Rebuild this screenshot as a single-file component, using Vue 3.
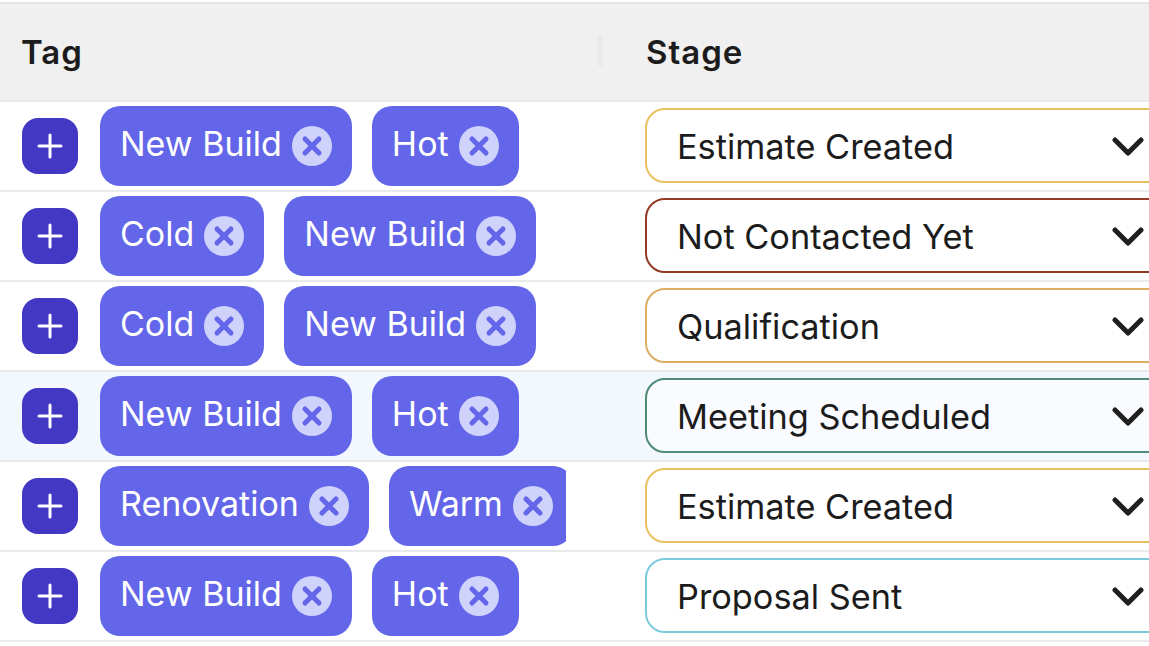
<script setup>
const rows = [
  { tags: ['New Build', 'Hot'], stage: 'Estimate Created', color: '#e8c15f' },
  { tags: ['Cold', 'New Build'], stage: 'Not Contacted Yet', color: '#933a25' },
  { tags: ['Cold', 'New Build'], stage: 'Qualification', color: '#dcae63' },
  { tags: ['New Build', 'Hot'], stage: 'Meeting Scheduled', color: '#4f8a76', active: true },
  { tags: ['Renovation', 'Warm'], stage: 'Estimate Created', color: '#e8c15f' },
  { tags: ['New Build', 'Hot'], stage: 'Proposal Sent', color: '#7ccbdc' },
]
</script>

<template>
  <div class="table">
    <div class="head">
      <div class="h-tag">Tag<span class="handle"></span></div>
      <div class="h-stage">Stage</div>
    </div>
    <div v-for="(r, i) in rows" :key="i" class="row" :class="{ active: r.active }">
      <div class="tag-cell">
        <button class="add">
          <svg width="28" height="28" viewBox="0 0 28 28"><path d="M14 3v22M3 14h22" stroke="#fff" stroke-width="3" stroke-linecap="round" fill="none" /></svg>
        </button>
        <div class="chips">
          <span v-for="t in r.tags" :key="t" class="chip">
            <span class="chip-text">{{ t }}</span>
            <span class="x">
              <svg width="40" height="40" viewBox="0 0 40 40"><path d="M13 13l14 14M27 13L13 27" stroke="#6366e8" stroke-width="5" stroke-linecap="round" fill="none" /></svg>
            </span>
          </span>
        </div>
      </div>
      <div class="stage-cell">
        <div class="select" :style="{ borderColor: r.color }">
          <span class="select-text">{{ r.stage }}</span>
          <svg class="chev" width="32" height="22" viewBox="0 0 32 22"><path d="M3 4l13 13L29 4" stroke="#1f1f1f" stroke-width="5" fill="none" stroke-linecap="round" stroke-linejoin="round" /></svg>
        </div>
      </div>
    </div>
  </div>
</template>

<style>
html, body { margin: 0; background: #fff; overflow: hidden; }
</style>

<style scoped>
.table {
  width: 1149px;
  height: 646px;
  overflow: hidden;
  padding-top: 2px;
  box-sizing: border-box;
  font-family: Inter, "Liberation Sans", sans-serif;
  color: #1c1c1c;
}
.head {
  display: flex;
  height: 100px;
  box-sizing: border-box;
  background: #f0f0f0;
  border-top: 2px solid #e5e5e5;
  border-bottom: 2px solid #e8e8e8;
  font-size: 33px;
  font-weight: 600;
  letter-spacing: 1px;
  align-items: center;
}
.h-tag {
  width: 625px;
  flex: none;
  box-sizing: border-box;
  padding-left: 21px;
  position: relative;
}
.handle {
  position: absolute;
  left: 598px;
  top: 3px;
  width: 5px;
  height: 31px;
  background: #e9e9e9;
}
.h-stage { padding-left: 21px; }
.row {
  display: flex;
  height: 90px;
  box-sizing: border-box;
  background: #fff;
  border-bottom: 2px solid #e9eaec;
}
.row.active { background: #f2f8fe; }
.tag-cell {
  width: 566px;
  flex: none;
  display: flex;
  align-items: center;
  padding-left: 22px;
  box-sizing: border-box;
  overflow: hidden;
}
.add {
  flex: none;
  width: 56px;
  height: 56px;
  border: 0;
  padding: 0;
  border-radius: 16px;
  background: #4338c4;
  display: flex;
  align-items: center;
  justify-content: center;
}
.chips {
  display: flex;
  gap: 20px;
  margin-left: 22px;
  flex: none;
}
.chip {
  display: flex;
  align-items: center;
  flex: none;
  height: 80px;
  box-sizing: border-box;
  padding: 0 20px 0 20px;
  border-radius: 20px;
  background: #6366e8;
  color: #fff;
  font-size: 34px;
}
.chip-text { position: relative; top: -3px; }
.x {
  width: 40px;
  height: 40px;
  margin-left: 10px;
  border-radius: 50%;
  background: #cfd2fb;
  flex: none;
  display: flex;
}
.stage-cell {
  flex: 1;
  padding: 6px 0 0 79px;
  display: flex;
  align-items: flex-start;
  min-width: 0;
}
.select {
  width: 540px;
  flex: none;
  height: 75px;
  box-sizing: border-box;
  border: 2px solid;
  border-radius: 20px;
  display: flex;
  align-items: center;
  padding-left: 31px;
  position: relative;
  font-size: 34.3px;
  background: #fff;
}
.row.active .select { background: #f9fbfe; }
.select-text { margin-left: -1px; position: relative; top: 1px; }
.chev {
  position: absolute;
  left: 465px;
  top: 26px;
}
</style>
